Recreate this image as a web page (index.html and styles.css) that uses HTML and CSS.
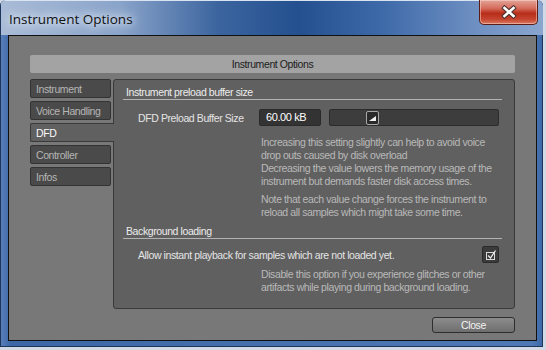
FILE: index.html
```html
<!DOCTYPE html>
<html lang="en">
  <head>
    <meta charset="UTF-8" />
    <title>Instrument Options</title>
    <link rel="stylesheet" href="styles.css">
  </head>
  <body>
    <div class="window">
      <div class="titlebar">
        <span class="title">Instrument Options</span>
        <div class="winClose">
          <svg width="18" height="14" viewBox="0 0 18 14">
            <path d="M4.5 3 L13.5 11 M13.5 3 L4.5 11" stroke="#4a3030" stroke-width="4.6" stroke-linecap="square" fill="none" />
            <path d="M4.5 3 L13.5 11 M13.5 3 L4.5 11" stroke="#ffffff" stroke-width="2.6" stroke-linecap="square" fill="none" />
          </svg>
        </div>
      </div>
      <div class="client">
        <div class="header">Instrument Options</div>
        <div class="content">
          <ul class="tabs">
            <li class="tab">Instrument</li>
            <li class="tab">Voice Handling</li>
            <li class="tab active">DFD</li>
            <li class="tab">Controller</li>
            <li class="tab">Infos</li>
          </ul>
          <section class="panel">
            <div class="sectionTitle">Instrument preload buffer size</div>
            <div class="row">
              <span class="label">DFD Preload Buffer Size</span>
              <span class="valueBox">60.00 kB</span>
              <div class="slider">
                <div class="thumb">
                  <svg width="11" height="12" viewBox="0 0 11 12">
                    <path d="M2 9 L9 4 L9 9 Z" fill="#f2f2f2" />
                  </svg>
                </div>
              </div>
            </div>
            <div class="hint">
              <p>Increasing this setting slightly can help to avoid voice drop outs caused by disk overload<br>Decreasing the value lowers the memory usage of the instrument but demands faster disk access times.</p>
              <p>Note that each value change forces the instrument to reload all samples which might take some time.</p>
            </div>
            <div class="sectionTitle second">Background loading</div>
            <div class="row check">
              <span class="label wide">Allow instant playback for samples which are not loaded yet.</span>
              <div class="checkbox">
                <svg width="15" height="14" viewBox="0 0 15 14">
                  <rect x="3.5" y="4.5" width="8" height="7" fill="none" stroke="#d8d8d8" stroke-width="1" />
                  <path d="M5 7.5 L7.5 10 L12.5 2.5" fill="none" stroke="#e8e8e8" stroke-width="1.3" />
                </svg>
              </div>
            </div>
            <div class="hint">
              <p>Disable this option if you experience glitches or other artifacts while playing during background loading.</p>
            </div>
          </section>
        </div>
        <div class="footer">
          <button class="closeBtn" type="button">Close</button>
        </div>
      </div>
    </div>
  </body>
</html>
```

FILE: styles.css
```css
body {
  margin: 0;
  background: #d3dae6;
  font-family: 'Liberation Sans', Arial, sans-serif;
  font-size: 10.5px;
}
.window {
  width: 543px;
  height: 347px;
  display: flex;
  flex-direction: column;
  border-radius: 6px 6px 0 0;
  background: linear-gradient(90deg, #5a82bc 0%, #3c67a6 2%, #4f79b6 98%, #3c67a6 100%);
  box-shadow: inset 0 0 0 1px #1d3558;
  overflow: hidden;
}
.titlebar {
  height: 35px;
  flex: 0 0 auto;
  display: flex;
  align-items: flex-start;
  background: linear-gradient(90deg, #a9bcd7 0%, #8aa4ca 22%, #3c659f 40%, #24508f 55%, #3d69a8 70%, #6f90c2 88%, #8aa6cf 100%);
  box-shadow: inset 0 1px 0 #d9e3f1, inset 1px 0 0 #1d3558;
}
.title {
  margin: 10px 0 0 9px;
  font-family: 'Open Sans', 'Noto Sans', sans-serif;
  font-size: 13.5px;
  color: #111;
  text-shadow: 0 0 6px #dfe8f4, 0 0 10px #dfe8f4, 0 0 14px #dfe8f4;
}
.winClose {
  margin-left: auto;
  margin-right: 5px;
  width: 59px;
  height: 25px;
  box-sizing: border-box;
  border: 1px solid #5a1c14;
  border-top: none;
  border-radius: 0 0 5px 5px;
  background: linear-gradient(180deg, #e2a59a 0%, #d66b5a 35%, #b72d1a 55%, #c5442f 80%, #d97a5f 100%);
  display: flex;
  align-items: center;
  justify-content: center;
  box-shadow: inset 0 0 0 1px rgba(255, 220, 210, 0.5);
}
.client {
  flex: 1 1 auto;
  margin: 0 6px 6px 8px;
  border: 1px solid #101010;
  background: #787878;
  padding: 19px 21px 0 21px;
  display: flex;
  flex-direction: column;
  letter-spacing: -0.4px;
}
.header {
  height: 18px;
  line-height: 18px;
  background: #a3a3a3;
  border-radius: 2px;
  text-align: center;
  color: #1c1c1c;
  margin-bottom: 6px;
}
.content {
  display: flex;
  height: 230px;
}
.tabs {
  list-style: none;
  margin: 0;
  padding: 0;
  width: 83px;
  display: flex;
  flex-direction: column;
  gap: 3px;
}
.tab {
  height: 19px;
  line-height: 18px;
  box-sizing: border-box;
  margin-right: 2px;
  padding-left: 5px;
  background: #4a4a4a;
  border: 1px solid #333;
  border-radius: 2px;
  color: #b6b6b6;
}
.tab.active {
  position: relative;
  z-index: 1;
  margin-right: -1px;
  background: #606060;
  border-color: #3a3a3a;
  border-right: none;
  border-radius: 2px 0 0 2px;
  color: #fafafa;
}
.panel {
  flex: 1 1 auto;
  background: #606060;
  border: 1px solid #3a3a3a;
  border-radius: 3px;
  color: #e6e6e6;
}
.sectionTitle {
  margin: 5px 12px 0 9px;
  padding: 0 3px;
  line-height: 14px;
  border-bottom: 1px solid #b2b2b2;
  color: #ececec;
}
.sectionTitle.second {
  margin-top: 3px;
}
.row {
  display: flex;
  align-items: center;
  height: 17px;
  margin-top: 9px;
  padding: 0 15px 0 24px;
}
.row.check {
  margin-top: 7px;
}
.label {
  width: 121px;
  flex: 0 0 auto;
  color: #e4e4e4;
}
.label.wide {
  width: auto;
  flex: 1 1 auto;
}
.valueBox {
  width: 62px;
  height: 17px;
  box-sizing: border-box;
  line-height: 15px;
  padding-left: 6px;
  background: #333;
  border: 1px solid #2a2a2a;
  border-radius: 2px;
  color: #fff;
  font-size: 11px;
}
.slider {
  margin-left: 8px;
  width: 170px;
  height: 17px;
  box-sizing: border-box;
  background: #3d3d3d;
  border: 1px solid #2c2c2c;
  border-radius: 2px;
  display: flex;
  align-items: center;
  padding-left: 36px;
}
.thumb {
  width: 13px;
  height: 14px;
  box-sizing: border-box;
  background: #2a2a2a;
  border: 1px solid #a8a8a8;
  border-radius: 2px;
  display: flex;
  align-items: center;
  justify-content: center;
}
.checkbox {
  width: 17px;
  height: 17px;
  box-sizing: border-box;
  background: #3b3b3b;
  border: 1px solid #2a2a2a;
  border-radius: 2px;
  display: flex;
  align-items: center;
  justify-content: center;
}
.hint {
  margin: 10px 0 0 147px;
  color: #b9b9b9;
  line-height: 13px;
  width: 236px;
}
.hint p {
  margin: 0 0 5px 0;
}
.row.check + .hint {
  margin-top: 5px;
}
.footer {
  display: flex;
  justify-content: flex-end;
  padding-top: 8px;
}
.closeBtn {
  width: 83px;
  height: 16px;
  padding: 0;
  background: linear-gradient(180deg, #8c8c8c 0%, #6e6e6e 100%);
  border: 1px solid #2e2e2e;
  border-radius: 3px;
  color: #f2f2f2;
  font-family: 'Liberation Sans', Arial, sans-serif;
  font-size: 10.5px;
  letter-spacing: -0.4px;
}
```
